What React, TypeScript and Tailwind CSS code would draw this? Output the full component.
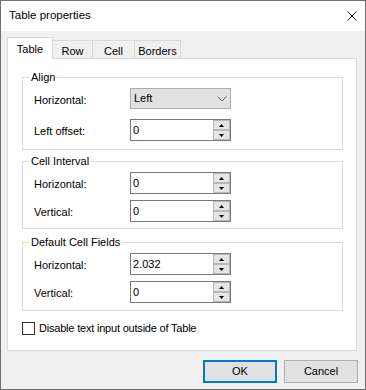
import React from "react";

const font = "font-['Liberation_Sans',Arial,sans-serif]";

function Spin({ value }: { value: string }) {
  return (
    <div className="w-[101px] h-[22px] border border-[#7a7a7a] bg-white flex">
      <div className="flex-1 pl-[2px] text-[11px] leading-[20px] text-black">{value}</div>
      <div className="w-[17px] flex flex-col">
        <div className="h-[10px] bg-[#e5e5e5] border border-[#b9b9b9] flex items-center justify-center">
          <svg width="5" height="3" viewBox="0 0 5 3"><path d="M2.5 0 L5 3 L0 3 Z" fill="#000" /></svg>
        </div>
        <div className="h-[10px] bg-[#e5e5e5] border border-[#b9b9b9] flex items-center justify-center">
          <svg width="5" height="3" viewBox="0 0 5 3"><path d="M0 0 L5 0 L2.5 3 Z" fill="#000" /></svg>
        </div>
      </div>
    </div>
  );
}

function Row({ label, children }: { label: string; children: React.ReactNode }) {
  return (
    <div className="flex items-center">
      <div className="w-[107px] pl-[11px] text-[11px] leading-[14px] pt-[2px] text-black">{label}</div>
      {children}
    </div>
  );
}

function Group({ title, h, gap, children }: { title: string; h: string; gap: string; children: React.ReactNode }) {
  return (
    <div className={`relative border border-[#dcdcdc] w-[321px] ${h}`}>
      <span className="absolute top-[-8px] left-[6px] bg-white px-[2px] text-[11px] leading-[14px] text-black">{title}</span>
      <div className={`flex flex-col pt-[10px] ${gap}`}>{children}</div>
    </div>
  );
}

export default function App() {
  return (
    <div className={`${font} w-[366px] h-[390px] border border-[#6f6f6f] bg-[#f0f0f0] flex flex-col text-black`}>
      <div className="h-[30px] bg-white flex items-center justify-between pl-[8px] pr-[8px]">
        <span className="text-[11.5px]">Table properties</span>
        <svg width="10" height="10" viewBox="0 0 10 10">
          <path d="M0.5 0.5 L9.5 9.5 M9.5 0.5 L0.5 9.5" stroke="#111" strokeWidth="1" />
        </svg>
      </div>
      <div className="flex-1 flex flex-col px-[6px] pt-[6px]">
        <div className="flex items-end h-[21px]">
          <div className="relative z-10 w-[46px] h-[22px] -mb-px bg-white border border-b-0 border-[#d9d9d9] text-[11px] flex items-start justify-center pt-[3px]">Table</div>
          <div className="-ml-px w-[41px] h-[18px] border border-b-0 border-[#d9d9d9] text-[11px] flex items-start justify-center pt-[2px]">Row</div>
          <div className="-ml-px w-[43px] h-[18px] border border-b-0 border-[#d9d9d9] text-[11px] flex items-start justify-center pt-[2px]">Cell</div>
          <div className="-ml-px w-[47px] h-[18px] border border-b-0 border-[#d9d9d9] text-[11px] flex items-start justify-center pt-[2px]">Borders</div>
        </div>
        <div className="w-[350px] h-[293px] bg-white border border-[#d9d9d9] pl-[14px] pt-[18px] flex flex-col">
          <Group title="Align" h="h-[73px]" gap="gap-[10px]">
            <Row label="Horizontal:">
              <div className="w-[101px] h-[21px] bg-[#e1e1e1] border border-[#adadad] flex items-center justify-between pl-[3px] pr-[3px]">
                <span className="text-[11px]">Left</span>
                <svg width="10" height="6" viewBox="0 0 10 6">
                  <path d="M0.5 0.5 L5 5 L9.5 0.5" stroke="#606060" strokeWidth="1" fill="none" />
                </svg>
              </div>
            </Row>
            <Row label="Left offset:">
              <Spin value="0" />
            </Row>
          </Group>
          <div className="mt-[11px]">
            <Group title="Cell Interval" h="h-[68px]" gap="gap-[6px]">
              <Row label="Horizontal:"><Spin value="0" /></Row>
              <Row label="Vertical:"><Spin value="0" /></Row>
            </Group>
          </div>
          <div className="mt-[13px]">
            <Group title="Default Cell Fields" h="h-[69px]" gap="gap-[6px]">
              <Row label="Horizontal:"><Spin value="2.032" /></Row>
              <Row label="Vertical:"><Spin value="0" /></Row>
            </Group>
          </div>
          <div className="mt-[10px] flex items-center gap-[4px]">
            <div className="w-[13px] h-[13px] border border-[#333333] bg-white" />
            <span className="text-[11px] leading-[14px] tracking-[-0.2px]">Disable text input outside of Table</span>
          </div>
        </div>
        <div className="flex justify-end gap-[7px] mt-[9px] pr-[1px]">
          <div className="w-[74px] h-[23px] border-2 border-[#0078d7] bg-[#e1e1e1] flex items-center justify-center text-[11px]">OK</div>
          <div className="w-[74px] h-[23px] border border-[#adadad] bg-[#e1e1e1] flex items-center justify-center text-[11px]">Cancel</div>
        </div>
      </div>
    </div>
  );
}
